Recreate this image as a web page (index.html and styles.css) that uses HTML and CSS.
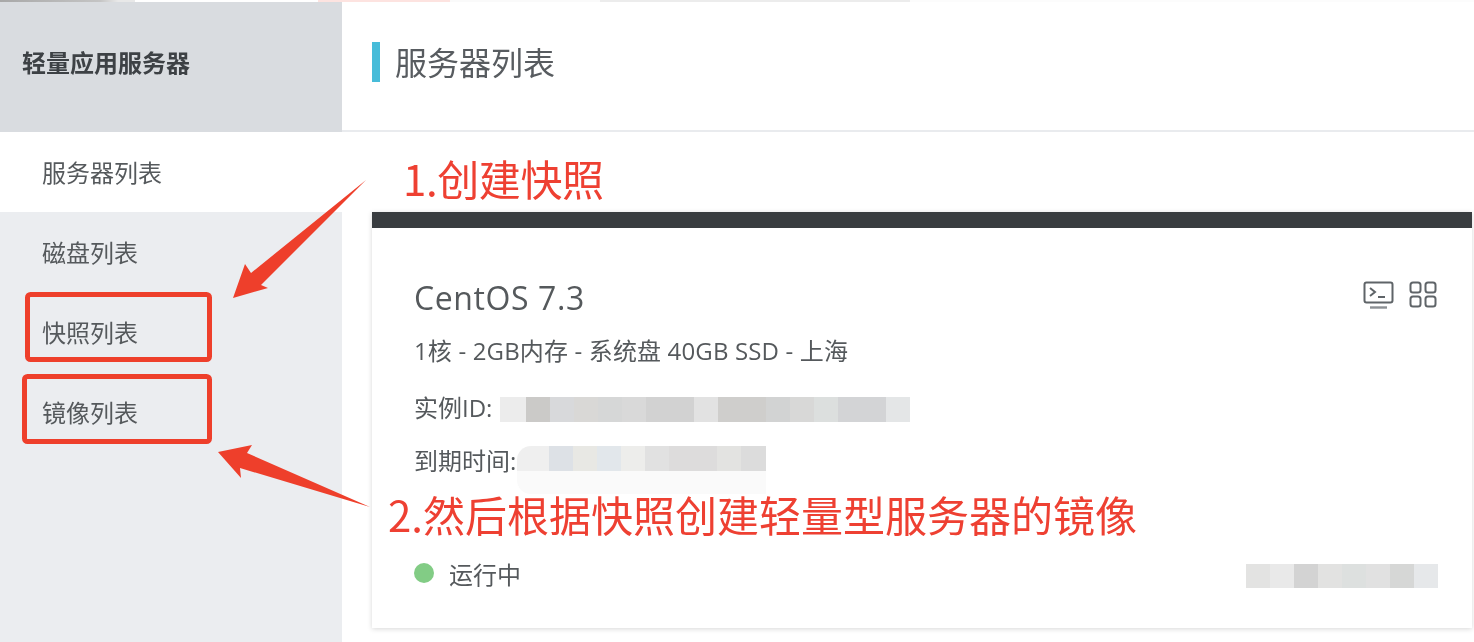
FILE: index.html
```html
<!DOCTYPE html>
<html lang="zh-CN">
<head>
<meta charset="utf-8">
<title>服务器列表</title>
<link rel="stylesheet" href="styles.css">
</head>
<body>
<div class="page">
  <div class="topstrip"></div>
  <div class="layout">
    <aside class="sidebar">
      <div class="side-head">轻量应用服务器</div>
      <nav class="side-nav">
        <a class="side-item active">服务器列表</a>
        <a class="side-item">磁盘列表</a>
        <a class="side-item">快照列表</a>
        <a class="side-item">镜像列表</a>
      </nav>
    </aside>
    <main class="main">
      <header class="main-head">
        <span class="accent"></span>
        <h1 class="main-title">服务器列表</h1>
      </header>
      <section class="card">
        <div class="card-top">
          <h2 class="os">CentOS 7.3</h2>
          <div class="icons">
            <svg class="icon-term" width="31" height="28" viewBox="0 0 31 28" fill="none" stroke="#5f6468" stroke-width="2">
              <rect x="1.5" y="1.5" width="28" height="20" rx="2"/>
              <path d="M7 7l5 4-5 4"/>
              <path d="M15 16h7" stroke-width="2"/>
              <path d="M7 26.5h17" stroke="#8c9094" stroke-width="2.4"/>
            </svg>
            <svg class="icon-grid" width="28" height="27" viewBox="0 0 28 27" fill="none" stroke="#5f6468" stroke-width="2">
              <rect x="1.5" y="1.5" width="10" height="10" rx="2.5"/>
              <rect x="16.5" y="1.5" width="10" height="10" rx="2.5"/>
              <rect x="1.5" y="15.5" width="10" height="10" rx="2.5"/>
              <rect x="16.5" y="15.5" width="10" height="10" rx="2.5"/>
            </svg>
          </div>
        </div>
        <p class="spec">1核 - 2GB内存 - 系统盘 40GB SSD - 上海</p>
        <div class="row row-id"><span class="label">实例ID:</span><span class="mask mask-id"></span></div>
        <div class="row row-time"><span class="label">到期时间:</span><span class="mask mask-time"></span><span class="mask mask-fade"></span></div>
        <div class="status">
          <div class="state"><span class="dot"></span><span class="label">运行中</span></div>
          <span class="mask mask-ip"></span>
        </div>
      </section>
    </main>
  </div>

  <svg class="marks" width="1474" height="642" viewBox="0 0 1474 642">
    <rect class="box" x="27.5" y="294.5" width="182" height="65" rx="3"/>
    <rect class="box" x="24.5" y="376.5" width="185" height="65" rx="3"/>
    <polygon class="arrow" points="366,180 261,285 268,288 233,298 245,264 251,273"/>
    <polygon class="arrow" points="370,507 247,453 252,445 218,452 241,478 240,468"/>
  </svg>
  <div class="note note-1">1.创建快照</div>
  <div class="note note-2">2.然后根据快照创建轻量型服务器的镜像</div>
</div>
</body>
</html>
```
FILE: styles.css
```css
* { box-sizing: border-box; }
html, body { margin: 0; padding: 0; background: #fff; }
body {
  width: 1474px;
  height: 642px;
  overflow: hidden;
  font-family: "Open Sans", "Noto Sans CJK SC", sans-serif;
  color: #55595c;
}
.page {
  position: relative;
  width: 1474px;
  height: 642px;
  overflow: hidden;
  filter: blur(0.6px);
}
.topstrip {
  height: 2px;
  background: linear-gradient(90deg,
    #a8a8a8 0, #c4c4c4 100px, #e8e8e8 118px, #e8e8e8 135px,
    #fff 135px, #fff 318px,
    #fde3e0 318px, #fde3e0 450px,
    #fafafa 450px, #fafafa 600px,
    #ececec 600px, #ececec 910px,
    #fcfcfc 910px);
}
.layout { display: flex; height: 640px; }
.sidebar {
  width: 342px;
  flex: none;
  background: #ebedf0;
}
.side-head {
  height: 130px;
  padding: 0 0 12px 22px;
  display: flex;
  align-items: center;
  background: #d9dce0;
  font-size: 24px;
  font-weight: 700;
  color: #3d4145;
}
.side-nav { display: flex; flex-direction: column; }
.side-item {
  height: 80px;
  padding: 0 0 1px 42px;
  display: flex;
  align-items: center;
  font-size: 24px;
  color: #55595c;
}
.side-item.active { background: #fff; }
.main { flex: 1; min-width: 0; background: #fff; }
.main-head {
  height: 130px;
  border-bottom: 2px solid #e9ebee;
  padding: 40px 0 0 30px;
  display: flex;
  align-items: flex-start;
}
.accent { width: 8px; height: 40px; background: #47bcd9; flex: none; }
.main-title {
  margin: -2px 0 0 15px;
  font-size: 32px;
  line-height: 46px;
  font-weight: 400;
  color: #585c60;
}
.card {
  width: 1100px;
  margin: 80px 0 0 30px;
  height: 416px;
  border-top: 16px solid #393d40;
  background: #fff;
  padding: 48px 35px 0 42px;
  box-shadow: 0 1px 5px rgba(0, 0, 0, .16);
}
.card-top { display: flex; justify-content: space-between; align-items: flex-start; }
.os {
  margin: 0;
  font-size: 32px;
  line-height: 44px;
  font-weight: 400;
  letter-spacing: .6px;
  color: #55595c;
}
.icons { display: flex; gap: 15px; margin-top: 5px; }
.spec { margin: 13px 0 0; font-size: 24px; line-height: 36px; letter-spacing: .15px; }
.row { display: flex; align-items: center; font-size: 24px; line-height: 36px; }
.row-id { margin-top: 22px; }
.row-time { margin-top: 17px; position: relative; }
.label { position: relative; top: -1px; }
.mask { display: block; height: 25px; flex: none; }
.mask-id {
  width: 410px;
  margin-left: 8px;
  background: linear-gradient(90deg,
    #ececec 0 26px, #cbcac8 26px 50px, #d8d9db 50px 74px, #d9d8d6 74px 98px,
    #d6d7d7 98px 122px, #d9d9d9 122px 146px, #d2d2d2 146px 194px, #e2e2e2 194px 218px,
    #cfcecc 218px 266px, #d2d3d3 266px 290px, #d8d8d7 290px 314px, #dcdfde 314px 338px,
    #d3d4d6 338px 386px, #e4e6e7 386px 410px);
}
.mask-time {
  width: 249px;
  margin: -8px 0 0 1px;
  background: linear-gradient(90deg,
    #efefef 0 32px, #dde1e6 32px 56px, #e8e8e4 56px 80px, #e2e7eb 80px 104px,
    #ededeb 104px 128px, #e1e1e1 128px 152px, #dddcdc 152px 200px, #e3e3e1 200px 224px,
    #dcdcdc 224px 249px);
  border-radius: 14px 0 0 0;
}
.mask-fade {
  position: absolute;
  left: 103px;
  top: 27px;
  width: 249px;
  height: 23px;
  background: #fafafa;
  border-radius: 0 0 0 14px;
}
.status {
  margin-top: 78px;
  display: flex;
  align-items: center;
  justify-content: space-between;
  font-size: 24px;
  line-height: 36px;
}
.state { display: flex; align-items: center; gap: 15px; }
.dot { width: 20px; height: 20px; border-radius: 50%; background: #82cc85; flex: none; margin-top: -6px; }
.mask-ip {
  width: 192px;
  height: 24px;
  margin-right: -1px;
  background: linear-gradient(90deg,
    #e3e3e2 0 24px, #e9e9e9 24px 48px, #d3d3d3 48px 72px, #e2e2e1 72px 96px,
    #dde0df 96px 120px, #e1e1e1 120px 144px, #d6d7d6 144px 168px, #e6e8ea 168px 192px);
}
.marks { position: absolute; left: 0; top: 0; pointer-events: none; }
.box { fill: none; stroke: #ee3f2b; stroke-width: 5; }
.arrow { fill: #ee3f2b; }
.note {
  position: absolute;
  color: #ee4032;
  font-family: "Noto Sans CJK SC", sans-serif;
  white-space: nowrap;
}
.note-1 { left: 403px; top: 148px; font-size: 42px; line-height: 60px; letter-spacing: -.4px; }
.note-2 { left: 388px; top: 484px; font-size: 42px; line-height: 60px; }
```
